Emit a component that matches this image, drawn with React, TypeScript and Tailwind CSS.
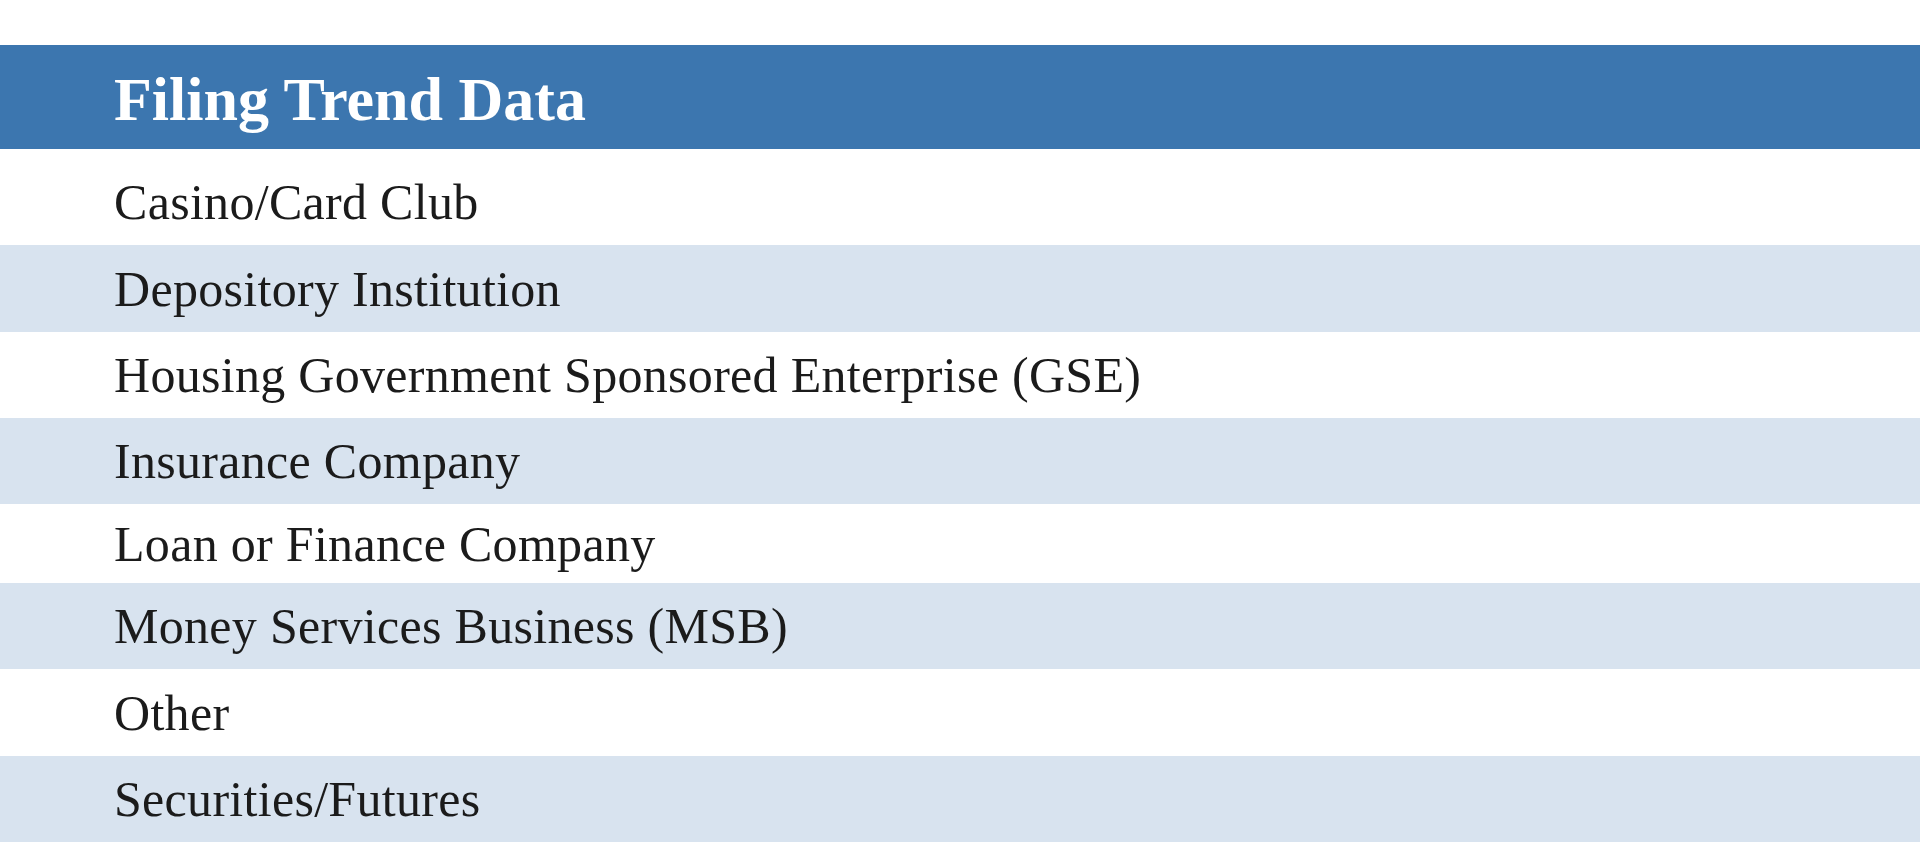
const rows = [
  { label: "Casino/Card Club", h: "h-[96px] pt-[10px]", bg: "bg-white" },
  { label: "Depository Institution", h: "h-[87px]", bg: "bg-[#d8e3ef]" },
  { label: "Housing Government Sponsored Enterprise (GSE)", h: "h-[86px]", bg: "bg-white" },
  { label: "Insurance Company", h: "h-[86px]", bg: "bg-[#d8e3ef]" },
  { label: "Loan or Finance Company", h: "h-[79px]", bg: "bg-white" },
  { label: "Money Services Business (MSB)", h: "h-[86px]", bg: "bg-[#d8e3ef]" },
  { label: "Other", h: "h-[87px]", bg: "bg-white" },
  { label: "Securities/Futures", h: "h-[86px]", bg: "bg-[#d8e3ef]" },
];

export default function App() {
  return (
    <div className="w-[1920px] h-[844px] bg-white pt-[45px] font-['Liberation_Serif',serif] overflow-hidden">
      {/* section header */}
      <div className="h-[104px] bg-[#3c76af] flex items-center pl-[114px]">
        <h2 className="text-[62px] font-bold text-white leading-none pt-[4px]">
          Filing Trend Data
        </h2>
      </div>

      <ul>
        {rows.map((r) => (
          <li
            key={r.label}
            className={`${r.h} ${r.bg} flex items-center pl-[114px] text-[50px] tracking-[0.3px] text-[#1b1b1b] leading-none`}
          >
            {r.label}
          </li>
        ))}
      </ul>
    </div>
  );
}
